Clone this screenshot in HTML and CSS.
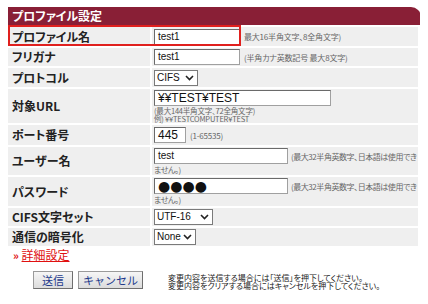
FILE: index.html
```html
<!DOCTYPE html>
<html>
<head>
	<title>プロファイル設定</title>
	<meta charset="utf-8">
	<meta name="viewport" content="width=device-width, initial-scale=1">
	<link rel="stylesheet" href="styles.css">
</head>
<body>
  <div class="panel">
    <div class="panel-head">プロファイル設定</div>
    <div class="focus-box"></div>

    <table class="form">
      <tr class="r19">
        <th>プロファイル名</th>
        <td><span class="inp w86">test1</span><span class="hint">最大16半角文字、8全角文字)</span></td>
      </tr>
      <tr class="r18">
        <th>フリガナ</th>
        <td><span class="inp w86">test1</span><span class="hint">(半角カナ英数記号 最大8文字)</span></td>
      </tr>
      <tr class="r19">
        <th>プロトコル</th>
        <td><span class="sel w44">CIFS<svg width="9" height="6" viewBox="0 0 9 6"><path d="M1 1l3.5 3.5L8 1" fill="none" stroke="#222" stroke-width="1.6"/></svg></span></td>
      </tr>
      <tr class="r35">
        <th>対象URL</th>
        <td>
          <span class="inp w177 big">¥¥TEST¥TEST</span>
          <div class="hint block">(最大144半角文字、72全角文字)<br>例) ¥¥TESTCOMPUTER¥TEST</div>
        </td>
      </tr>
      <tr class="r20">
        <th>ポート番号</th>
        <td><span class="inp w32 big">445</span><span class="hint">(1-65535)</span></td>
      </tr>
      <tr class="r28">
        <th>ユーザー名</th>
        <td class="wrap"><span class="inp w134">test</span><span class="hint">(最大32半角英数字、日本語は使用できません。)</span></td>
      </tr>
      <tr class="r29">
        <th>パスワード</th>
        <td class="wrap"><span class="inp w134 dots">●●●●</span><span class="hint">(最大32半角英数字、日本語は使用できません。)</span></td>
      </tr>
      <tr class="r18">
        <th>CIFS文字セット</th>
        <td><span class="sel w59">UTF-16<svg width="9" height="6" viewBox="0 0 9 6"><path d="M1 1l3.5 3.5L8 1" fill="none" stroke="#222" stroke-width="1.6"/></svg></span></td>
      </tr>
      <tr class="r18">
        <th>通信の暗号化</th>
        <td><span class="sel w42">None<svg width="9" height="6" viewBox="0 0 9 6"><path d="M1 1l3.5 3.5L8 1" fill="none" stroke="#222" stroke-width="1.6"/></svg></span></td>
      </tr>
    </table>

    <div class="more"><span class="arr">»</span> <a href="#">詳細設定</a></div>

    <div class="actions">
      <div class="buttons">
        <button class="btn w40">送信</button>
        <button class="btn w65">キャンセル</button>
      </div>
      <p class="note">変更内容を送信する場合には「送信」を押下してください。<br>変更内容をクリアする場合にはキャンセルを押下してください。</p>
    </div>
  </div>
</body>
</html>
```

FILE: styles.css
```css
body {
	margin: 7px 8px;
	background: #fff;
	font-family: "Noto Sans CJK JP", "DejaVu Sans", sans-serif;
	font-feature-settings: "palt";
	color: #222;
}
.panel {
	position: relative;
	width: 413px;
}
.panel-head {
	height: 18px;
	line-height: 18px;
	background: #891f36;
	color: #fff;
	font-size: 12px;
	font-weight: bold;
	padding-left: 4px;
	border-top-right-radius: 10px;
}
/* 赤い枠（強調表示） */
.focus-box {
	position: absolute;
	left: 0;
	top: 18px;
	width: 229px;
	height: 17px;
	border: 2px solid #e0201e;
}
.form {
	border-collapse: separate;
	border-spacing: 2px;
	margin: 0 -2px;
	width: 414px;
}
.form th, .form td {
	background: #efefef;
	padding: 0;
	vertical-align: middle;
}
.form th {
	width: 138px;
	text-align: left;
	padding-left: 4px;
	font-size: 12px;
	line-height: 14px;
	font-weight: bold;
	color: #222;
	white-space: nowrap;
}
.form td {
	padding-left: 2px;
	font-size: 0;
	line-height: 0;
}
.r18 th, .r18 td { height: 18px; }
.r19 th, .r19 td { height: 19px; }
.r20 th, .r20 td { height: 20px; }
.r28 th, .r28 td { height: 28px; }
.r29 th, .r29 td { height: 29px; }
.r35 th, .r35 td { height: 34px; }
.form td.wrap { vertical-align: top; padding-top: 1px; height: auto; }

.inp {
	display: inline-block;
	vertical-align: middle;
	box-sizing: border-box;
	height: 16px;
	line-height: 14px;
	background: #fff;
	border: 1px solid #a0a0a0;
	border-top-color: #6a6a6a;
	border-left-color: #6a6a6a;
	font-family: "Liberation Sans", sans-serif;
	font-size: 10px;
	padding-left: 3px;
	color: #111;
}
.inp.big { font-size: 12px; }
.inp.dots { font-family: "DejaVu Sans", sans-serif; font-size: 14px; line-height: 14px; }
.w32 { width: 32px; }
.w86 { width: 86px; }
.w134 { width: 134px; }
.w177 { width: 177px; }

.sel {
	display: inline-flex;
	align-items: center;
	justify-content: space-between;
	gap: 2px;
	vertical-align: middle;
	box-sizing: border-box;
	height: 16px;
	background: #fff;
	border: 1px solid #7a7a7a;
	font-family: "Liberation Sans", sans-serif;
	font-size: 10px;
	line-height: 14px;
	padding: 0 3px 0 2px;
	color: #111;
}
.w42 { width: 42px; }
.w44 { width: 44px; }
.w59 { width: 59px; }

.hint {
	font-size: 8px;
	color: #666;
	margin-left: 4px;
	vertical-align: middle;
	line-height: 11px;
	letter-spacing: -0.2px;
}
.wrap .hint { margin-left: 3px; letter-spacing: -0.45px; }
.hint.block {
	display: block;
	margin: 1px 0 0 0;
	font-size: 7.5px;
	line-height: 8px;
}
.more {
	margin: 0 0 0 5px;
	font-size: 12px;
	line-height: 14px;
	color: #e01010;
}
.more .arr { font-size: 11px; font-weight: bold; }
.more a { color: #e01010; }

.actions {
	display: flex;
	align-items: center;
	margin-top: 8px;
}
.buttons {
	display: flex;
	gap: 5px;
	margin-left: 25px;
}
.btn {
	height: 18px;
	padding: 0;
	background: linear-gradient(#f6f6f6, #dcdcdc);
	border: 1px solid #9a9a9a;
	border-right-color: #6e6e6e;
	border-bottom-color: #6e6e6e;
	font-family: "Noto Sans CJK JP", sans-serif;
	font-size: 11px;
	color: #1d3a8c;
	line-height: 16px;
}
.w40 { width: 40px; }
.w65 { width: 65px; }
.note {
	margin: 4px 0 0 25px;
	font-size: 8px;
	line-height: 8px;
	color: #222;
}
```
